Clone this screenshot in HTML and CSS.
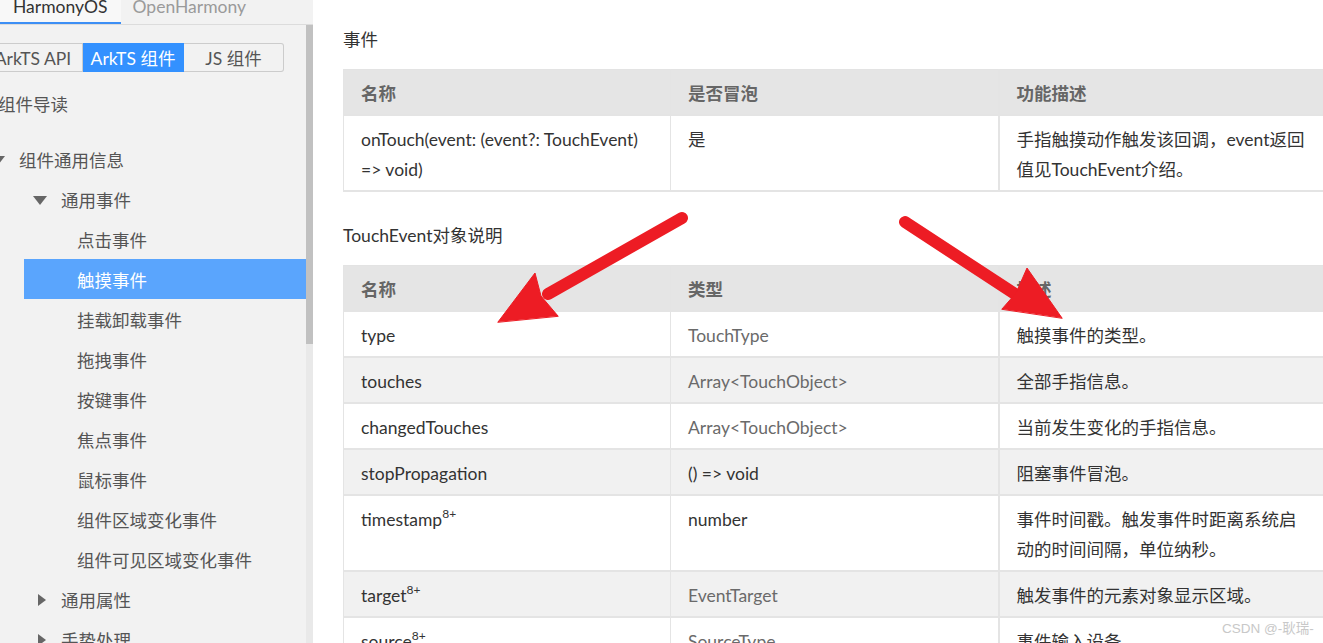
FILE: index.html
```html
<!DOCTYPE html>
<html lang="zh-CN">
<head>
  <meta charset="UTF-8">
  <title>触摸事件</title>
  <link rel="stylesheet" href="styles.css">
</head>
<body>
  <div class="page">
    <aside class="sidebar">
      <div class="os-tabs">
        <div class="os-tab active">HarmonyOS</div>
        <div class="os-tab">OpenHarmony</div>
      </div>
      <div class="side-body">
        <nav class="side-nav">
          <div class="kit-switch">
            <div class="kit-btn">ArkTS API</div>
            <div class="kit-btn selected">ArkTS 组件</div>
            <div class="kit-btn">JS 组件</div>
          </div>
          <ul class="tree">
            <li class="node intro">组件导读</li>
            <li class="node lv0"><span class="caret down"></span>组件通用信息</li>
            <li class="node lv1"><span class="caret down"></span>通用事件</li>
            <li class="node lv2">点击事件</li>
            <li class="node lv2 current">触摸事件</li>
            <li class="node lv2">挂载卸载事件</li>
            <li class="node lv2">拖拽事件</li>
            <li class="node lv2">按键事件</li>
            <li class="node lv2">焦点事件</li>
            <li class="node lv2">鼠标事件</li>
            <li class="node lv2">组件区域变化事件</li>
            <li class="node lv2">组件可见区域变化事件</li>
            <li class="node lv1"><span class="caret right"></span>通用属性</li>
            <li class="node lv1"><span class="caret right"></span>手势处理</li>
          </ul>
        </nav>
        <div class="scrollbar"><div class="thumb"></div></div>
      </div>
    </aside>

    <main class="content">
      <p class="section-title">事件</p>
      <table class="doc-table">
        <thead>
          <tr><th>名称</th><th>是否冒泡</th><th>功能描述</th></tr>
        </thead>
        <tbody>
          <tr>
            <td>onTouch(event: (event?: TouchEvent) =&gt; void)</td>
            <td>是</td>
            <td>手指触摸动作触发该回调，event返回值见TouchEvent介绍。</td>
          </tr>
        </tbody>
      </table>

      <p class="section-title">TouchEvent对象说明</p>
      <table class="doc-table">
        <thead>
          <tr><th>名称</th><th>类型</th><th>描述</th></tr>
        </thead>
        <tbody>
          <tr><td>type</td><td class="ref">TouchType</td><td>触摸事件的类型。</td></tr>
          <tr><td>touches</td><td class="ref">Array&lt;TouchObject&gt;</td><td>全部手指信息。</td></tr>
          <tr><td>changedTouches</td><td class="ref">Array&lt;TouchObject&gt;</td><td>当前发生变化的手指信息。</td></tr>
          <tr><td>stopPropagation</td><td>() =&gt; void</td><td>阻塞事件冒泡。</td></tr>
          <tr><td>timestamp<sup>8+</sup></td><td>number</td><td>事件时间戳。触发事件时距离系统启动的时间间隔，单位纳秒。</td></tr>
          <tr><td>target<sup>8+</sup></td><td class="ref">EventTarget</td><td>触发事件的元素对象显示区域。</td></tr>
          <tr><td>source<sup>8+</sup></td><td class="ref">SourceType</td><td>事件输入设备。</td></tr>
        </tbody>
      </table>
    </main>
  </div>

  <!-- red annotation arrows drawn over the screenshot -->
  <svg class="annot" width="1323" height="643" viewBox="0 0 1323 643">
    <g fill="#ed1c24" stroke="#ed1c24" stroke-linecap="round">
      <line x1="682" y1="218" x2="548" y2="294" stroke-width="12"/>
      <polygon points="498,322 535,273 541,296 558,316" stroke-width="1"/>
      <line x1="905" y1="222" x2="1018" y2="296" stroke-width="12"/>
      <polygon points="1062,318 1027,268 1016,293 1002,309" stroke-width="1"/>
    </g>
  </svg>

  <div class="watermark">CSDN @-耿瑞-</div>
</body>
</html>
```

FILE: styles.css
```css
body {
  margin: 0;
  width: 1323px;
  height: 643px;
  overflow: hidden;
  position: relative;
  font-family: Lato, "Noto Sans CJK SC", sans-serif;
  font-size: 17.5px;
  color: #333;
  background: #ffffff;
}

.page {
  display: flex;
  height: 643px;
}

/* ---------- sidebar ---------- */

.sidebar {
  width: 313px;
  flex-shrink: 0;
  background: #f2f2f2;
  display: flex;
  flex-direction: column;
}

.os-tabs {
  display: flex;
  height: 25px;
  border-bottom: 1px solid #dcdcdc;
  box-sizing: border-box;
}

.os-tab {
  padding: 0 12px;
  line-height: 13px;
  color: #9a9a9a;
  white-space: nowrap;
}

.os-tab.active {
  padding: 0 13px;
  color: #333;
  background: #f8f8f8;
  border-bottom: 2px solid #3d8ff5;
  height: 22px;
}

.side-body {
  flex: 1;
  display: flex;
  min-height: 0;
}

.side-nav {
  flex: 1;
  overflow: hidden;
}

.scrollbar {
  width: 7px;
  background: #e9e9e9;
}

.scrollbar .thumb {
  height: 319px;
  background: #c1c1c1;
}

.kit-switch {
  display: flex;
  margin: 18px 0 0 -17px;
}

.kit-btn {
  width: 100px;
  height: 29px;
  line-height: 29px;
  box-sizing: border-box;
  border: 1px solid #cccccc;
  text-align: center;
  color: #555;
  background: #f2f2f2;
  white-space: nowrap;
}

.kit-btn + .kit-btn {
  border-left: none;
}

.kit-btn.selected {
  width: 101px;
  background: #3391ff;
  border-color: #3391ff;
  color: #ffffff;
}

.kit-btn:last-child {
  border-radius: 0 3px 3px 0;
}

.tree {
  list-style: none;
  margin: 11px 0 0 -9px;
  padding: 0;
}

.node {
  height: 40px;
  box-sizing: border-box;
  padding-top: 3px;
  line-height: 37px;
  color: #555;
  white-space: nowrap;
  display: flex;
  align-items: center;
}

.node.intro {
  padding-left: 7px;
  margin-bottom: 16px;
}

.node.lv0 {
  padding-left: 0;
}

.node.lv1 {
  padding-left: 42px;
}

.node.lv2 {
  margin-left: 33px;
  padding-left: 53px;
}

.node.current {
  background: #5aa5fd;
  color: #ffffff;
}

.caret {
  width: 15px;
  margin-right: 13px;
  height: 12px;
  position: relative;
  flex-shrink: 0;
}

.caret.down::before {
  content: "";
  position: absolute;
  left: 0;
  top: 1px;
  border-left: 7.5px solid transparent;
  border-right: 7.5px solid transparent;
  border-top: 9px solid #666;
}

.caret.right::before {
  content: "";
  position: absolute;
  left: 5px;
  top: -1px;
  border-top: 6px solid transparent;
  border-bottom: 6px solid transparent;
  border-left: 8px solid #666;
}

/* ---------- content ---------- */

.content {
  flex: 1;
  overflow: hidden;
  padding: 24px 0 0 30px;
}

.section-title {
  margin: 0 0 14px;
  padding-top: 1px;
  line-height: 30px;
  color: #333;
  white-space: nowrap;
}

.doc-table {
  border-collapse: collapse;
  table-layout: fixed;
  width: 984px;
  margin-bottom: 28px;
  border: 1px solid #e3e3e3;
}

.doc-table th,
.doc-table td {
  box-sizing: border-box;
  width: 328px;
  padding: 9px 17px 5px;
  line-height: 30px;
  text-align: left;
  vertical-align: top;
  border-bottom: 2px solid #e4e4e4;
  border-left: 1px solid #e4e4e4;
}

.doc-table th:first-child,
.doc-table td:first-child {
  width: 327px;
}

.doc-table th:nth-child(3),
.doc-table td:nth-child(3) {
  width: 329px;
  border-left: 2px solid #e4e4e4;
}

.doc-table th {
  background: #e5e5e5;
  color: #666;
  font-weight: bold;
}

.doc-table td {
  color: #333;
}

.doc-table td.ref {
  color: #6a6a6a;
}

.doc-table tbody tr:nth-child(even) td {
  background: #f1f1f1;
}

.doc-table sup {
  font-size: 12px;
  line-height: 0;
  vertical-align: 8px;
}

/* ---------- overlays ---------- */

.annot {
  position: absolute;
  left: 0;
  top: 0;
  pointer-events: none;
}

.watermark {
  position: absolute;
  left: 1222px;
  top: 617px;
  font-size: 13.5px;
  color: #c8c8c8;
  font-family: "Liberation Sans", "Noto Sans CJK SC", sans-serif;
  white-space: nowrap;
}
```
